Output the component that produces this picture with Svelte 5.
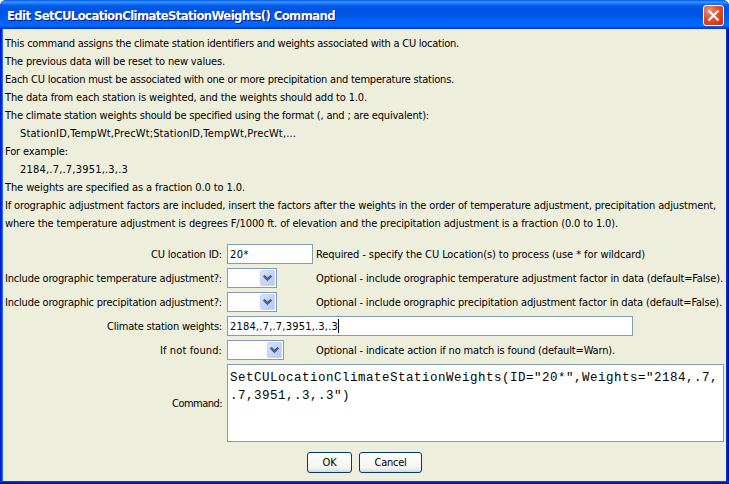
<script>
  const notes = [
    { text: 'This command assigns the climate station identifiers and weights associated with a CU location.', width: 454 },
    { text: 'The previous data will be reset to new values.', width: 220 },
    { text: 'Each CU location must be associated with one or more precipitation and temperature stations.', width: 449 },
    { text: 'The data from each station is weighted, and the weights should add to 1.0.', width: 362 },
    { text: 'The climate station weights should be specified using the format (, and ; are equivalent):', width: 424 },
    { text: 'StationID,TempWt,PrecWt;StationID,TempWt,PrecWt,...', width: 276, indent: true },
    { text: 'For example:', width: 63 },
    { text: '2184,.7,.7,3951,.3,.3', width: 108, indent: true },
    { text: 'The weights are specified as a fraction 0.0 to 1.0.', width: 240 },
    { text: 'If orographic adjustment factors are included, insert the factors after the weights in the order of temperature adjustment, precipitation adjustment,', width: 711 },
    { text: 'where the temperature adjustment is degrees F/1000 ft. of elevation and the precipitation adjustment is a fraction (0.0 to 1.0).', width: 613 }
  ];

  const rows = [
    { label: 'CU location ID:', labelWidth: 71, kind: 'text', value: '20*', valueWidth: 19, size: 86, hint: 'Required - specify the CU Location(s) to process (use * for wildcard)', hintWidth: 329 },
    { label: 'Include orographic temperature adjustment?:', labelWidth: 217, kind: 'combo', size: 50, hint: 'Optional - include orographic temperature adjustment factor in data (default=False).', hintWidth: 407 },
    { label: 'Include orographic precipitation adjustment?:', labelWidth: 217, kind: 'combo', size: 50, hint: 'Optional - include orographic precipitation adjustment factor in data (default=False).', hintWidth: 406 },
    { label: 'Climate station weights:', labelWidth: 115, kind: 'text', value: '2184,.7,.7,3951,.3,.3', valueWidth: 108, size: 406, caret: true },
    { label: 'If not found:', labelWidth: 62, kind: 'combo', size: 57, hint: 'Optional - indicate action if no match is found (default=Warn).', hintWidth: 299 }
  ];

  // Spread the tracking evenly so a line occupies the given width.
  function fit(node, width) {
    const natural = node.getBoundingClientRect().width;
    node.style.letterSpacing = (width - natural) / node.textContent.length + 'px';
  }
</script>

<div class="window">
  <header>
    <span class="title" use:fit={328}>Edit SetCULocationClimateStationWeights() Command</span>
    <button class="close" aria-label="Close">
      <svg width="21" height="21" viewBox="0 0 21 21">
        <defs>
          <radialGradient id="red" cx=".3" cy=".25" r=".9">
            <stop offset="0" stop-color="#ee9377" />
            <stop offset=".45" stop-color="#e2502c" />
            <stop offset="1" stop-color="#c9350c" />
          </radialGradient>
        </defs>
        <rect x=".5" y=".5" width="20" height="20" rx="2.5" fill="url(#red)" stroke="#fff" />
        <path d="M5.5 5.5 L15.5 15.5 M15.5 5.5 L5.5 15.5" stroke="#fff" stroke-width="2.3" />
      </svg>
    </button>
  </header>

  <main>
    <section class="notes">
      {#each notes as note}
        <div class="note" class:indent={note.indent}><span use:fit={note.width}>{note.text}</span></div>
      {/each}
    </section>

    <section class="form">
      {#each rows as row}
        <div class="row">
          <div class="label"><span use:fit={row.labelWidth}>{row.label}</span></div>
          <div class="slot" class:wide={!row.hint}>
            <div class="field" style="width: {row.size}px">
              {#if row.kind === 'text'}
                <span class="value" use:fit={row.valueWidth}>{row.value}</span>
                {#if row.caret}<i class="caret"></i>{/if}
              {:else}
                <svg class="arrow" width="17" height="18" viewBox="0 0 17 18">
                  <defs>
                    <linearGradient id="blue" x1="0" y1="0" x2="1" y2="1">
                      <stop offset="0" stop-color="#d8e3fd" />
                      <stop offset="1" stop-color="#b4c9f5" />
                    </linearGradient>
                  </defs>
                  <rect x="1.5" y="1.5" width="14" height="15" rx="1" fill="url(#blue)" stroke="#c3d3fa" />
                  <path d="M4.7 6.7 L8.5 10.5 L12.3 6.7" fill="none" stroke="#4d6185" stroke-width="2.6" />
                </svg>
              {/if}
            </div>
          </div>
          {#if row.hint}<div class="hint"><span use:fit={row.hintWidth}>{row.hint}</span></div>{/if}
        </div>
      {/each}
      <div class="row command">
        <div class="label"><span use:fit={50}>Command:</span></div>
        <div class="area">
          <div><span use:fit={488}>SetCULocationClimateStationWeights(ID="20*",Weights="2184,.7,</span></div>
          <div><span use:fit={120}>.7,3951,.3,.3")</span></div>
        </div>
      </div>
    </section>

    <footer>
      <button class="push ok"><span use:fit={14}>OK</span></button>
      <button class="push cancel"><span use:fit={32}>Cancel</span></button>
    </footer>
  </main>
</div>

<style>
  :global(body) { margin: 0; background: #fff; }
  .window {
    box-sizing: border-box;
    width: 729px;
    height: 484px;
    display: flex;
    flex-direction: column;
    overflow: hidden;
    border-radius: 6px 6px 0 0;
    background: linear-gradient(90deg, #0019cf 0 1px, #0831d9 1px 2px, #166aee 2px 3px, #0048f1 3px 726px, #0030dc 726px 727px, #001ea0 727px 728px, #00138c 728px);
    font: 11px/18px "DejaVu Sans Condensed", "DejaVu Sans", sans-serif;
    font-stretch: condensed;
    color: #000;
  }
  span { white-space: nowrap; }
  header {
    box-sizing: border-box;
    height: 29px;
    flex: none;
    display: flex;
    align-items: center;
    justify-content: space-between;
    padding: 3px 5px 0 7px;
    background: linear-gradient(180deg, #0058e6 0, #3a93ff 2px, #2a86ff 3px, #0560f0 5px, #0054e3 8px, #0055e5 15px, #0062fb 20px, #0069ff 25px, #005bea 27px, #003dd0 28px, #0037c8 29px);
  }
  .title {
    color: #fff;
    font-size: 13px;
    font-weight: bold;
    text-shadow: 1px 1px 0 #0a1883;
  }
  button { margin: 0; padding: 0; font: inherit; color: inherit; }
  .close { position: relative; top: -1px; width: 21px; height: 21px; border: 0; background: none; display: flex; }
  main {
    flex: none;
    box-sizing: border-box;
    width: 723px;
    height: 452px;
    margin-left: 3px;
    padding: 6px 0 0 2px;
    background: #eeeedd;
  }
  .window::after {
    content: "";
    height: 3px;
    background: linear-gradient(#0040e8 0 1px, #0020b8 1px 2px, #00138c 2px);
  }
  .note { height: 18px; }
  .indent { padding-left: 15px; }
  .form { padding-top: 11px; display: flex; flex-direction: column; gap: 4px; }
  .row { display: flex; height: 20px; align-items: center; }
  .label { width: 217px; flex: none; display: flex; justify-content: flex-end; margin-right: 5px; }
  .label, .hint { padding-top: 2px; }
  .value { padding-top: 1px; }
  .slot { width: 86px; flex: none; margin-right: 3px; }
  .slot.wide { width: 406px; }
  .field {
    box-sizing: border-box;
    height: 20px;
    border: 1px solid #7f9db9;
    background: #fff;
    display: flex;
    align-items: center;
    padding-left: 2px;
  }
  .caret { width: 1px; height: 14px; background: #000; }
  .arrow { margin-left: auto; }
  .row.command { height: 78px; }
  .area {
    box-sizing: border-box;
    width: 497px;
    height: 78px;
    border: 1px solid #7f9db9;
    background: #fff;
    padding: 4px 2px;
    font: 12.5px/18px "Liberation Mono", monospace;
  }
  footer { display: flex; gap: 7px; padding: 10px 0 0 302px; }
  .push {
    box-sizing: border-box;
    height: 21px;
    border: 1px solid #003c74;
    border-radius: 3px;
    background: linear-gradient(#fff, #f4f3ee 80%, #dcd6cc);
    display: flex;
    align-items: center;
    justify-content: center;
  }
  .ok { width: 45px; }
  .cancel { width: 63px; }
</style>
